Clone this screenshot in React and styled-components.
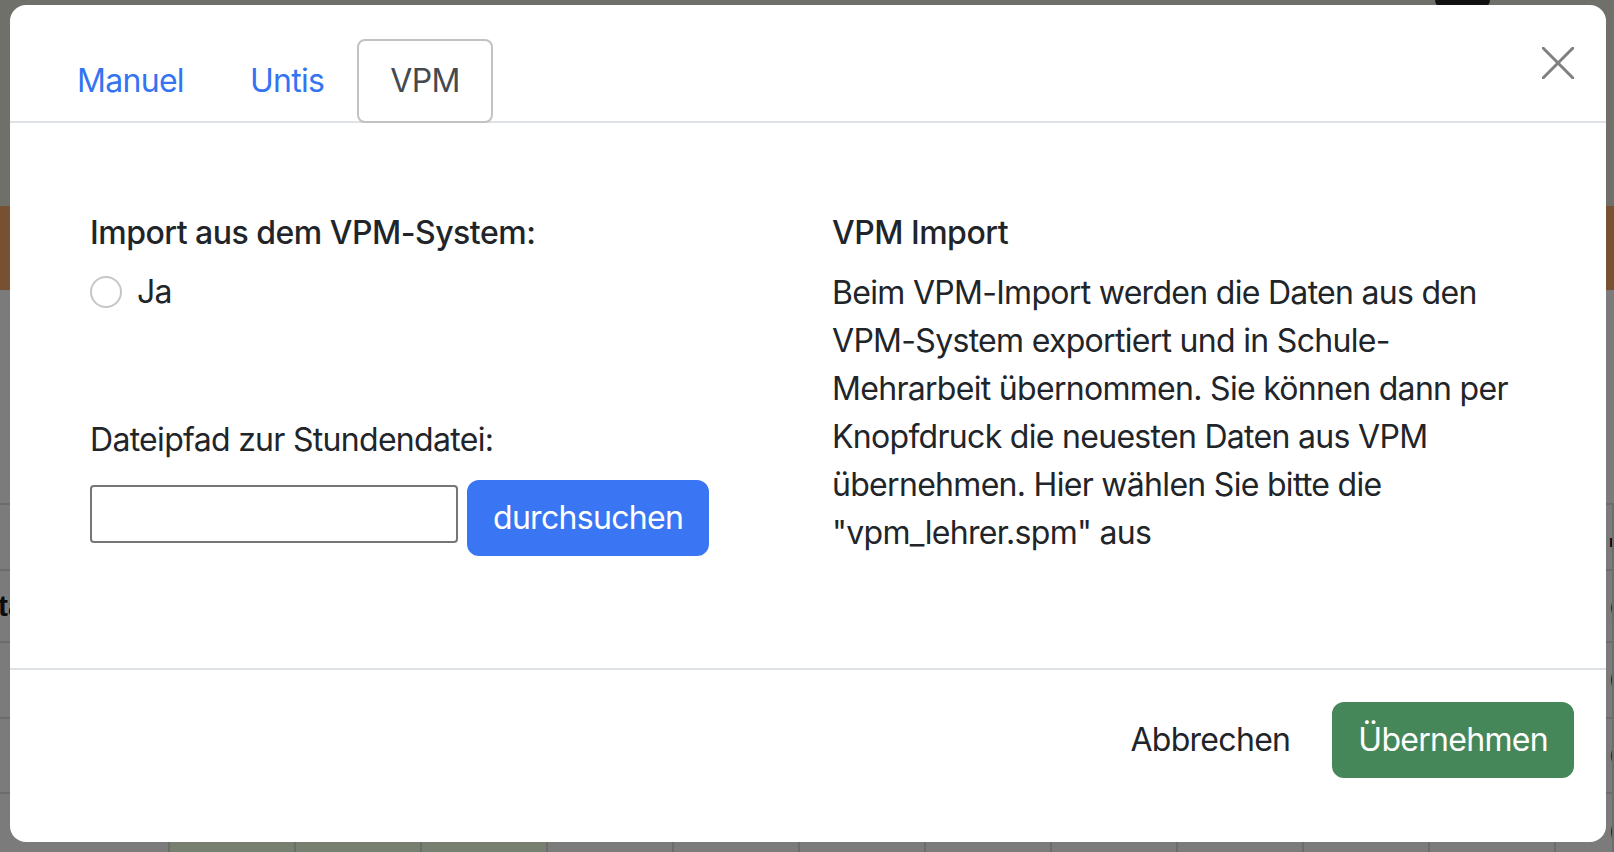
import React from "react";
import styled, { createGlobalStyle } from "styled-components";

const GlobalStyle = createGlobalStyle`
  html, body {
    margin: 0;
    padding: 0;
    height: 100%;
    overflow: hidden;
  }
  body {
    font-family: Inter, "Noto Sans", "Liberation Sans", sans-serif;
    -webkit-font-smoothing: antialiased;
  }
`;

/* ---- dimmed app behind the dialog ---- */

const Page = styled.div`
  position: relative;
  width: 1614px;
  height: 852px;
  background: #7b7b7b;
  overflow: hidden;
`;

const TopArea = styled.div`
  height: 206px;
  background: #6f7069;
  position: relative;
`;

const DarkPill = styled.div`
  position: absolute;
  left: 1435px;
  top: -10px;
  width: 55px;
  height: 18px;
  border-radius: 8px;
  background: #111;
`;

const BrownBand = styled.div`
  height: 84px;
  background: #775131;
`;

const Spacer = styled.div`
  height: 213px;
  border-bottom: 2px solid #6c6c6c;
`;

const GridRow = styled.div`
  display: grid;
  grid-template-columns: 170px repeat(11, 126px) 1fr;
  height: ${(p) => p.$h}px;
  border-bottom: 2px solid #6c6c6c;
  font-family: "Liberation Sans", Arial, sans-serif;
  font-size: 30px;
  font-weight: ${(p) => (p.$head ? 700 : 400)};
  color: #0c0c0c;
  white-space: nowrap;
`;

const GridCell = styled.div`
  display: flex;
  align-items: center;
  justify-content: center;
  border-right: 2px solid #6c6c6c;
  background: ${(p) => (p.$tint ? "#778070" : "transparent")};
  overflow: hidden;
`;

const EdgeCell = styled(GridCell)`
  justify-content: flex-start;
  padding-left: ${(p) => p.$pad}px;
`;

/* ---- dialog ---- */

const Modal = styled.div`
  position: absolute;
  left: 10px;
  top: 5px;
  width: 1596px;
  height: 837px;
  background: #fff;
  border-radius: 16px;
  display: flex;
  flex-direction: column;
  overflow: hidden;
  color: #212529;
  font-size: 32px;
  line-height: 48px;
  letter-spacing: -0.7px;
`;

const Header = styled.div`
  display: flex;
  align-items: flex-start;
  padding: 34px 32px 0 34px;
  border-bottom: 2px solid #dee2e6;
`;

const Tabs = styled.nav`
  display: flex;
`;

const Tab = styled.a`
  display: block;
  padding: 16px 31px;
  margin-bottom: -2px;
  border: 2px solid ${(p) => (p.$active ? "#c2c2c2" : "transparent")};
  border-radius: 8px;
  color: ${(p) => (p.$active ? "#444a50" : "#3474f1")};
  text-decoration: none;
  cursor: pointer;
  background: ${(p) => (p.$active ? "#fff" : "transparent")};
`;

const CloseButton = styled.button`
  margin-left: auto;
  margin-top: 8px;
  width: 32px;
  height: 32px;
  padding: 0;
  border: 0;
  background: none;
  color: #808080;
  cursor: pointer;
`;

const Body = styled.div`
  flex: 1;
  display: grid;
  grid-template-columns: 1fr 1fr;
  column-gap: 48px;
  padding: 86px 80px 0 80px;
`;

const Column = styled.div`
  display: flex;
  flex-direction: column;
  align-items: flex-start;
`;

const Heading = styled.div`
  font-weight: 550;
  letter-spacing: -0.5px;
  margin-bottom: ${(p) => p.$gap || 12}px;
`;

const Label = styled.label`
  display: block;
  margin-top: ${(p) => p.$top || 0}px;
  margin-bottom: 16px;
`;

const RadioRow = styled.label`
  display: flex;
  align-items: center;
  gap: 15px;
  height: 48px;
`;

const Radio = styled.input`
  appearance: none;
  margin: 0;
  width: 32px;
  height: 32px;
  border: 2px solid #c6c6c6;
  border-radius: 50%;
  background: #fff;
`;

const FileRow = styled.div`
  display: flex;
  align-items: flex-start;
`;

const PathInput = styled.input`
  box-sizing: border-box;
  width: 368px;
  height: 58px;
  margin: 5px 9px 0 0;
  border: 2px solid #767676;
  border-radius: 4px;
  font: inherit;
`;

const Button = styled.button`
  font: inherit;
  letter-spacing: inherit;
  line-height: 48px;
  padding: 12px 24px;
  border: 2px solid ${(p) => p.$bg || "transparent"};
  border-radius: 12px;
  background: ${(p) => p.$bg || "transparent"};
  color: ${(p) => (p.$bg ? "#fff" : "#212529")};
  cursor: pointer;
`;

const Text = styled.p`
  margin: 0;
`;

const Footer = styled.div`
  display: flex;
  justify-content: flex-end;
  gap: 16px;
  padding: 32px 32px 64px;
  border-top: 2px solid #dee2e6;
`;

const inner = Array.from({ length: 11 });

function BgRow({ h, first, last, fill }) {
  return (
    <GridRow $h={h} $head={first === "Status"}>
      <EdgeCell $pad={0}>
        <span style={{ marginLeft: -22 }}>{first}</span>
      </EdgeCell>
      {inner.map((_, i) => (
        <GridCell key={i} $tint={i <= 2}>
          {fill ? "0" : ""}
        </GridCell>
      ))}
      <EdgeCell $pad={54}>{last}</EdgeCell>
    </GridRow>
  );
}

export default function App() {
  return (
    <>
      <GlobalStyle />
      <Page>
        <TopArea>
          <DarkPill />
        </TopArea>
        <BrownBand />
        <Spacer />
        <BgRow h={64} last="▬" />
        <BgRow h={70} first="Status" last="g" />
        <BgRow h={74} last="0" />
        <BgRow h={73} last="0" />
        <BgRow h={76} last="0" fill />

        <Modal role="dialog">
          <Header>
            <Tabs>
              <Tab>Manuel</Tab>
              <Tab>Untis</Tab>
              <Tab $active>VPM</Tab>
            </Tabs>
            <CloseButton aria-label="Schließen">
              <svg width="32" height="32" viewBox="0 0 32 32">
                <path d="M1 1 L31 31 M31 1 L1 31" stroke="currentColor" strokeWidth="3" strokeLinecap="round" />
              </svg>
            </CloseButton>
          </Header>

          <Body>
            <Column>
              <Heading $gap={11}>Import aus dem VPM-System:</Heading>
              <RadioRow>
                <Radio type="radio" name="vpm" />
                Ja
              </RadioRow>
              <Label $top={100}>Dateipfad zur Stundendatei:</Label>
              <FileRow>
                <PathInput type="text" />
                <Button $bg="#3a76f4">durchsuchen</Button>
              </FileRow>
            </Column>
            <Column>
              <Heading>VPM Import</Heading>
              <Text>
                Beim VPM-Import werden die Daten aus den VPM-System exportiert und in
                Schule-Mehrarbeit übernommen. Sie können dann per Knopfdruck die neuesten
                Daten aus VPM übernehmen. Hier wählen Sie bitte die "vpm_lehrer.spm" aus
              </Text>
            </Column>
          </Body>

          <Footer>
            <Button>Abbrechen</Button>
            <Button $bg="#468759">Übernehmen</Button>
          </Footer>
        </Modal>
      </Page>
    </>
  );
}
